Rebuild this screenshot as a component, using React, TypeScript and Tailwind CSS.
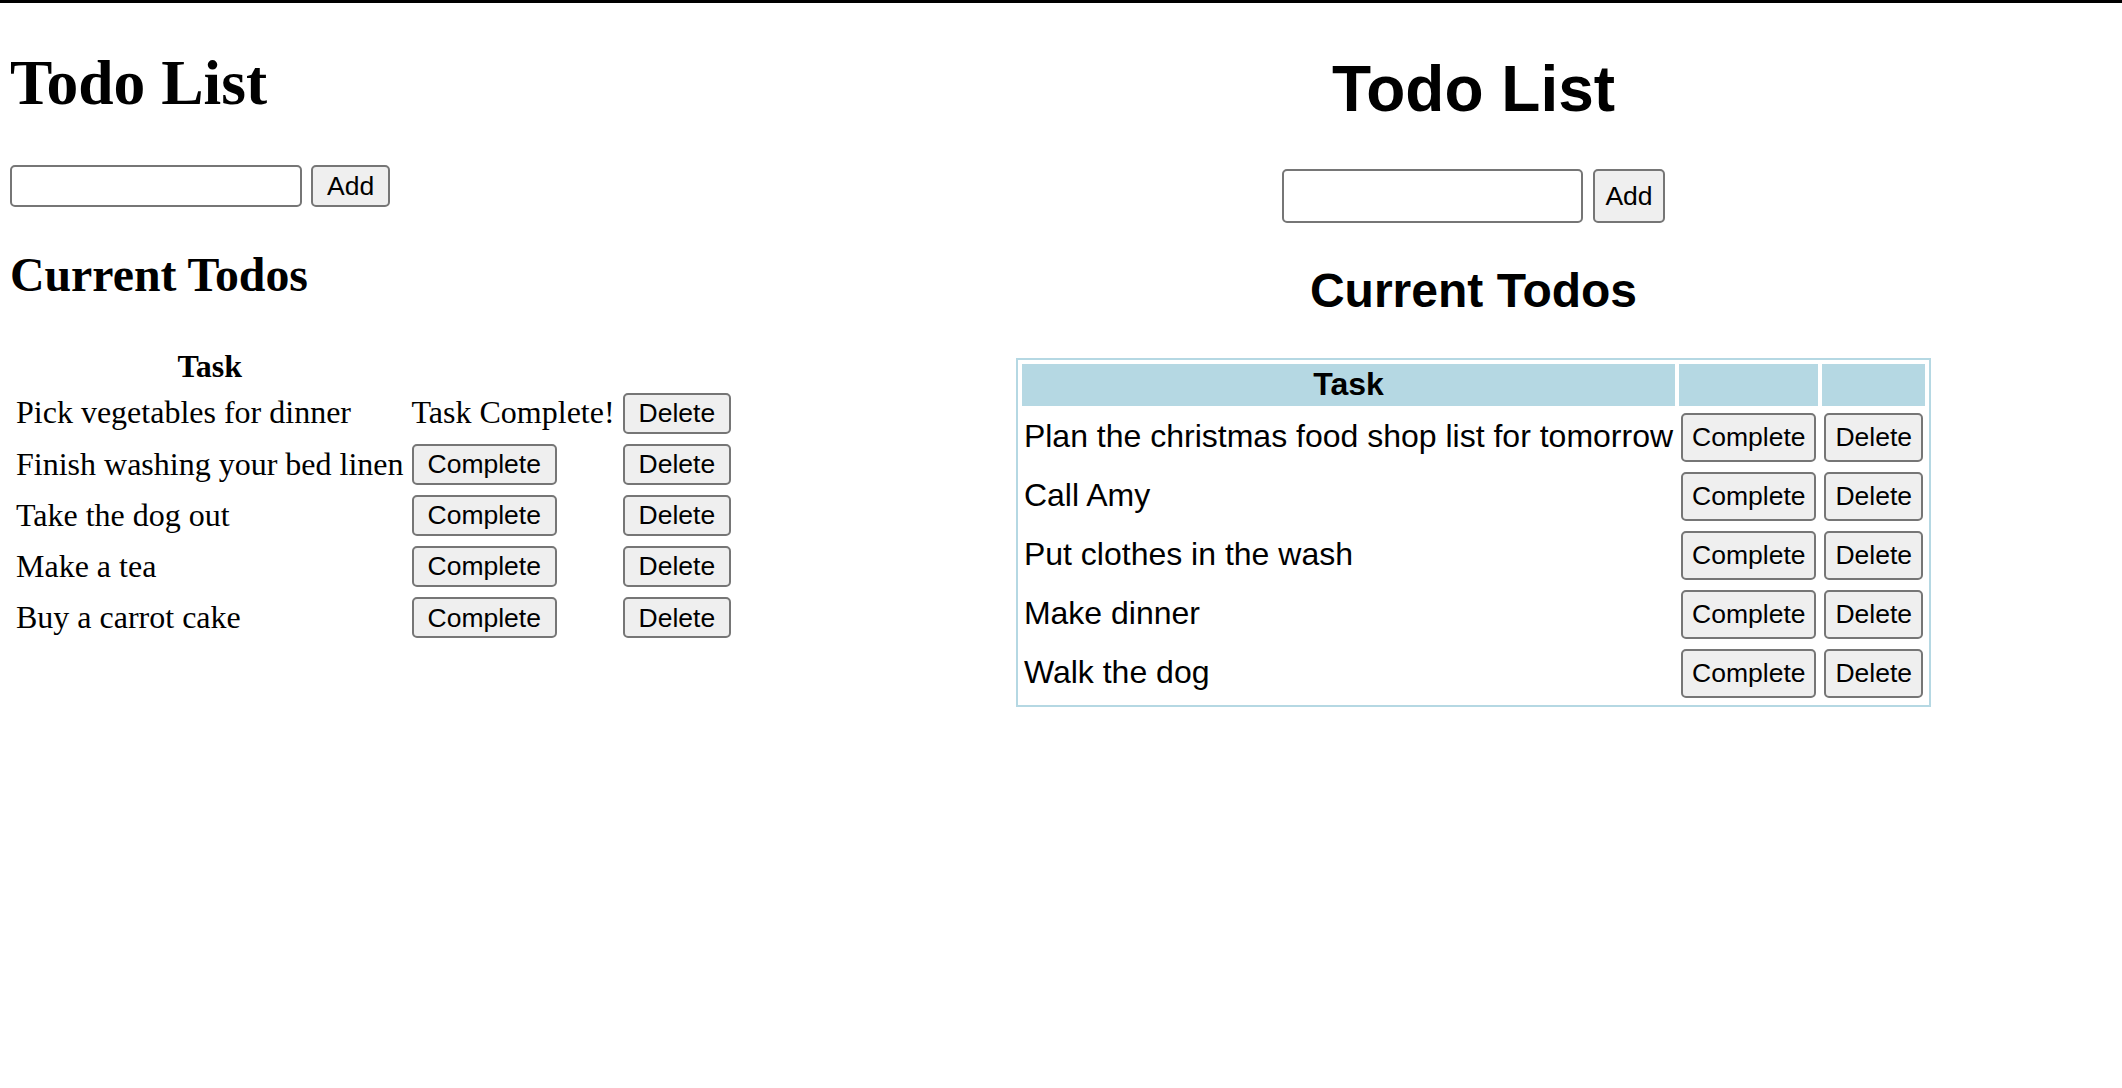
import { useState } from "react";

interface Todo {
  id: number;
  text: string;
  done: boolean;
}

const plainTodos: Todo[] = [
  { id: 1, text: "Pick vegetables for dinner", done: true },
  { id: 2, text: "Finish washing your bed linen", done: false },
  { id: 3, text: "Take the dog out", done: false },
  { id: 4, text: "Make a tea", done: false },
  { id: 5, text: "Buy a carrot cake", done: false },
];

const styledTodos: Todo[] = [
  { id: 1, text: "Plan the christmas food shop list for tomorrow", done: false },
  { id: 2, text: "Call Amy", done: false },
  { id: 3, text: "Put clothes in the wash", done: false },
  { id: 4, text: "Make dinner", done: false },
  { id: 5, text: "Walk the dog", done: false },
];

const btn =
  "font-['Liberation_Sans',Arial,sans-serif] text-[26.5px] leading-none text-black bg-[#efefef] border-2 border-[#767676] rounded-[5px] whitespace-nowrap";

function useTodos(initial: Todo[]) {
  const [todos, setTodos] = useState<Todo[]>(initial);
  const [draft, setDraft] = useState("");

  const add = () => {
    if (!draft.trim()) return;
    setTodos([...todos, { id: Date.now(), text: draft.trim(), done: false }]);
    setDraft("");
  };
  const complete = (id: number) => setTodos(todos.map((t) => (t.id === id ? { ...t, done: true } : t)));
  const remove = (id: number) => setTodos(todos.filter((t) => t.id !== id));

  return { todos, draft, setDraft, add, complete, remove };
}

// unstyled version: browser defaults look
function PlainTodoList() {
  const { todos, draft, setDraft, add, complete, remove } = useTodos(plainTodos);

  return (
    <div className="w-[825px] pl-[10px] font-['Liberation_Serif','Times_New_Roman',serif] text-black">
      <h1 className="mt-[44px] text-[63.5px] leading-[72px] font-bold">Todo List</h1>
      <div className="mt-[46px] flex items-center gap-[9px]">
        <input
          value={draft}
          onChange={(e) => setDraft(e.target.value)}
          className="w-[292px] h-[42px] bg-white border-2 border-[#767676] rounded-[5px] px-1 text-[26px] outline-none"
        />
        <button onClick={add} className={`${btn} h-[42px] px-[14px]`}>
          Add
        </button>
      </div>
      <h2 className="mt-[41px] text-[47.8px] leading-[54px] font-bold">Current Todos</h2>
      <table className="mt-[38px] border-separate border-spacing-[4px] text-[32px] leading-[35.6px]">
        <thead>
          <tr>
            <th className="px-[2px] pt-[5px] pb-[1px] text-center font-bold">Task</th>
          </tr>
        </thead>
        <tbody>
          {todos.map((t) => (
            <tr key={t.id}>
              <td className="px-[2px] py-[3px] align-middle whitespace-nowrap">{t.text}</td>
              <td className="px-[2px] py-[3px] align-middle whitespace-nowrap">
                {t.done ? (
                  "Task Complete!"
                ) : (
                  <button onClick={() => complete(t.id)} className={`${btn} h-[41px] px-[14px] align-middle`}>
                    Complete
                  </button>
                )}
              </td>
              <td className="px-[2px] py-[3px] align-middle">
                <button onClick={() => remove(t.id)} className={`${btn} h-[41px] px-[14px] align-middle`}>
                  Delete
                </button>
              </td>
            </tr>
          ))}
        </tbody>
      </table>
    </div>
  );
}

// styled version: centred, arial, light blue table
function StyledTodoList() {
  const { todos, draft, setDraft, add, complete, remove } = useTodos(styledTodos);

  return (
    <div className="flex-1 flex flex-col items-center font-['Liberation_Sans',Arial,sans-serif] text-black">
      <h1 className="mt-[50px] text-[64px] leading-[73px] font-bold">Todo List</h1>
      <div className="mt-[43px] flex items-center gap-[10px]">
        <input
          value={draft}
          onChange={(e) => setDraft(e.target.value)}
          className="w-[301px] h-[54px] bg-white border-2 border-[#767676] rounded-[5px] px-2 text-[26px] outline-none"
        />
        <button onClick={add} className={`${btn} h-[54px] px-[10px]`}>
          Add
        </button>
      </div>
      <h2 className="mt-[41px] text-[48px] leading-[54px] font-bold">Current Todos</h2>
      <table className="mt-[40px] border-separate border-spacing-[4px] border-2 border-[#b5d8e3] text-[32px] leading-[35.6px]">
        <thead>
          <tr>
            <th className="bg-[#b5d8e3] px-[2px] py-[3px] text-center font-bold">Task</th>
            <th className="bg-[#b5d8e3] px-[2px] py-[3px]"></th>
            <th className="bg-[#b5d8e3] px-[2px] py-[3px]"></th>
          </tr>
        </thead>
        <tbody>
          {todos.map((t) => (
            <tr key={t.id}>
              <td className="px-[2px] py-[3px] align-middle text-left whitespace-nowrap">
                {t.done ? <span className="line-through">{t.text}</span> : t.text}
              </td>
              <td className="px-[2px] py-[3px] align-middle">
                <button onClick={() => complete(t.id)} className={`${btn} h-[49px] px-[9px] align-middle`}>
                  Complete
                </button>
              </td>
              <td className="px-[2px] py-[3px] align-middle">
                <button onClick={() => remove(t.id)} className={`${btn} h-[49px] px-[9px] align-middle`}>
                  Delete
                </button>
              </td>
            </tr>
          ))}
        </tbody>
      </table>
    </div>
  );
}

export default function App() {
  return (
    <div className="min-h-screen w-full bg-white border-t-[3px] border-black flex items-start">
      <PlainTodoList />
      <StyledTodoList />
    </div>
  );
}
